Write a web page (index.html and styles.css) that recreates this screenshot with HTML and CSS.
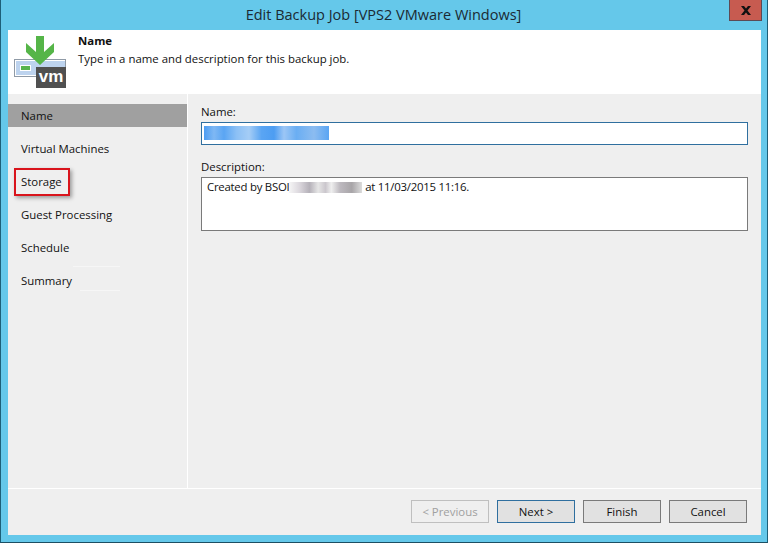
FILE: index.html
```html
<!DOCTYPE html>
<html lang="en">
<head>
  <meta charset="UTF-8">
  <title>Edit Backup Job</title>
  <link rel="stylesheet" href="styles.css">
</head>
<body>

  <div class="window">
    <div class="titlebar">
      <span class="title">Edit Backup Job [VPS2 VMware Windows]</span>
      <div class="close">
        <svg width="10" height="9" viewBox="0 0 10 9"><path d="M0 0 H3 L5 2.500 L7 0 H10 L6.500 4.500 L10 9 H7 L5 6.500 L3 9 H0 L3.500 4.500 Z" fill="#111"/></svg>
      </div>
    </div>

    <div class="content">
      <div class="header">
        <svg class="logo" width="54" height="54" viewBox="0 0 54 54">
          <rect x="0.500" y="24.500" width="51" height="17" fill="#fff" stroke="#8f9aa6"/>
          <rect x="2" y="26" width="49" height="14" fill="#bdd3ee"/>
          <rect x="6.500" y="30.500" width="10" height="5" fill="#57b44e" stroke="#fff"/>
          <path d="M22 1 H30 V17 L40 8 V17 L26 30 L12 17 V8 L22 17 Z" fill="#55b548"/>
          <rect x="22" y="32" width="30" height="21" fill="#505050"/>
          <text x="37" y="47" class="logo-text">vm</text>
        </svg>
        <div class="header-text">
          <div class="header-title">Name</div>
          <div>Type in a name and description for this backup job.</div>
        </div>
      </div>

      <div class="middle">
        <ul class="nav">
          <li class="selected">Name</li>
          <li>Virtual Machines</li>
          <li class="marked">Storage<span class="redbox"></span></li>
          <li>Guest Processing</li>
          <li>Schedule</li>
          <li class="summary">Summary</li>
        </ul>

        <div class="form">
          <label>Name:</label>
          <div class="field name-field"><span class="selection"></span></div>
          <label class="desc-label">Description:</label>
          <div class="field desc-field">Created by BSOI<span class="smudge"></span> at 11/03/2015 11:16.</div>
        </div>
      </div>

      <div class="footer">
        <button disabled>&lt; Previous</button>
        <button class="default">Next &gt;</button>
        <button>Finish</button>
        <button>Cancel</button>
      </div>
    </div>
  </div>

</body>
</html>
```

FILE: styles.css
```css
html, body {
  margin: 0;
  padding: 0;
  background: #fff;
}

body {
  width: 768px;
  height: 544px;
  overflow: hidden;
  font-family: "Open Sans", "Noto Sans", sans-serif;
  font-size: 11.4px;
  color: #111;
}

.window {
  width: 768px;
  height: 543px;
  box-sizing: border-box;
  background: #65c8ea;
  border-left: 1px solid #1d5f78;
  border-right: 1px solid #1d5f78;
  border-bottom: 1px solid #1d4f63;
  padding: 0 6px 7px 7px;
  display: flex;
  flex-direction: column;
}

.titlebar {
  height: 30px;
  flex: none;
  display: flex;
  justify-content: center;
  position: relative;
}

.title {
  font-size: 14.5px;
  line-height: 29px;
  color: #1b2a33;
  margin-right: 2px;
}

.close {
  position: absolute;
  top: 0;
  right: -1px;
  width: 33px;
  height: 21px;
  box-sizing: border-box;
  background: #c75b50;
  border: 1px solid #5c4a55;
  border-top: none;
  display: flex;
  align-items: center;
  justify-content: center;
}

.content {
  flex: 1;
  background: #efefef;
  display: flex;
  flex-direction: column;
}

.header {
  height: 64px;
  flex: none;
  background: #fff;
  display: flex;
}

.logo {
  margin: 5px 0 0 6px;
}

.logo-text {
  font-family: "Liberation Sans", sans-serif;
  font-size: 17px;
  font-weight: bold;
  fill: #fff;
  text-anchor: middle;
}

.header-text {
  margin-left: 10px;
  padding-top: 3px;
  line-height: 16px;
}

.header-title {
  font-weight: bold;
  margin-bottom: 2px;
}

.middle {
  flex: 1;
  display: flex;
  border-bottom: 1px solid #fff;
}

.nav {
  list-style: none;
  margin: 0;
  padding: 10px 0 0;
  width: 179px;
  flex: none;
  border-right: 1px solid #fff;
}

.nav li {
  height: 23px;
  line-height: 23px;
  margin-bottom: 10px;
  padding-left: 13px;
}

.nav li.selected {
  background: #a0a0a0;
}

.marked,
.summary {
  position: relative;
}

.redbox {
  position: absolute;
  left: 6px;
  top: -2px;
  width: 52px;
  height: 24px;
  border: 2px solid #d9141c;
  box-shadow: 2px 2px 4px rgba(0, 0, 0, 0.35);
}

/* faint lines left in the screenshot around the last item */
.summary::before,
.summary::after {
  content: "";
  position: absolute;
  right: 67px;
  height: 1px;
  background: #f6f6f6;
}

.summary::before {
  top: -3px;
  width: 47px;
}

.summary::after {
  top: 21px;
  width: 40px;
}

.form {
  flex: 1;
  padding: 9px 13px 0 13px;
}

label {
  display: block;
  line-height: 17px;
}

.field {
  box-sizing: border-box;
  background: #fff;
  border: 1px solid #7a7a7a;
}

.name-field {
  height: 23px;
  margin-top: 2px;
  padding: 3px 2px;
  border-color: #2f6f9f;
}

.selection {
  display: block;
  width: 125px;
  height: 14px;
  background: linear-gradient(90deg, #4d9df2 0, #7fb8f4 8%, #5aa5f3 16%, #8cc0f5 26%, #a5cdf6 36%, #5aa5f3 46%, #4d9df2 56%, #9cc6f5 64%, #6aaef3 74%, #8cbcf0 88%, #5aa5f3 100%);
}

.desc-label {
  margin-top: 13px;
}

.desc-field {
  height: 54px;
  margin-top: 2px;
  padding: 0 5px;
  line-height: 17px;
  letter-spacing: -0.25px;
}

.smudge {
  display: inline-block;
  width: 73px;
  height: 11px;
  vertical-align: -2px;
  background: linear-gradient(90deg, #f6f6f6 0, #dcd8de 14%, #b5b1b9 28%, #e6e6e6 40%, #cbc7cd 50%, #efefef 58%, #bdb9bf 70%, #a8a5a8 86%, #dcdcdc 100%);
}

.footer {
  height: 46px;
  flex: none;
  display: flex;
  justify-content: flex-end;
  gap: 8px;
  padding: 11px 14px 0 0;
  box-sizing: border-box;
}

button {
  width: 78px;
  height: 23px;
  box-sizing: border-box;
  font-family: inherit;
  font-size: 11.4px;
  color: #111;
  background: #e1e1e1;
  border: 1px solid #7a7a7a;
  padding: 0;
}

button:disabled {
  color: #a0a0a0;
  background: #efefef;
  border-color: #bfbfbf;
}

button.default {
  border-color: #2f6f9f;
}
```
